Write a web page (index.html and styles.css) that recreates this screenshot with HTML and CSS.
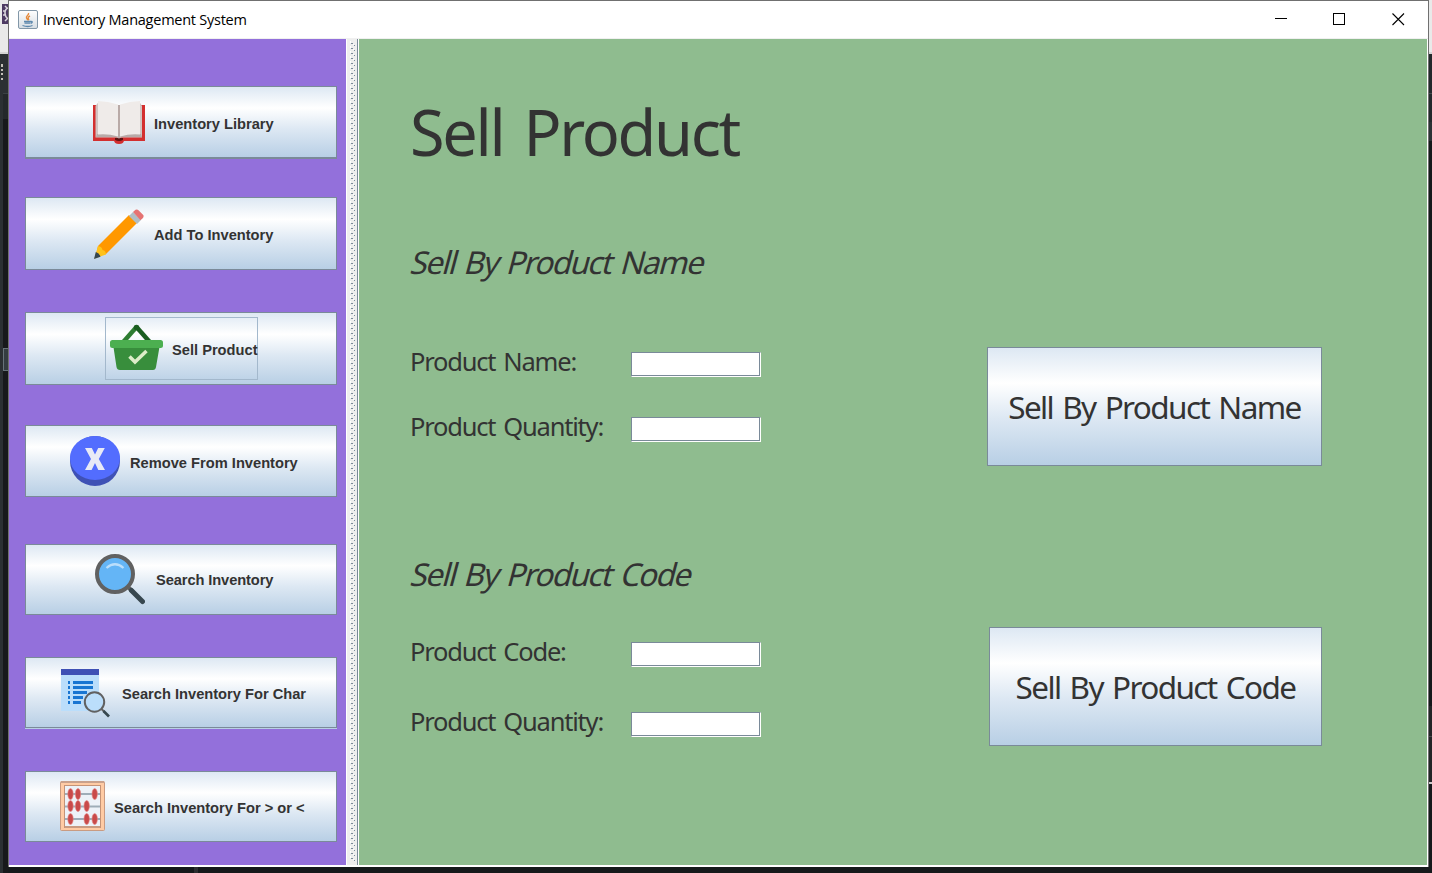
FILE: index.html
```html
<!DOCTYPE html>
<html lang="en">
<head>
<meta charset="utf-8">
<title>Inventory Management System</title>
<link rel="stylesheet" href="styles.css">
</head>
<body>
<svg class="desktop" width="1432" height="873" viewBox="0 0 1432 873" shape-rendering="crispEdges">
  <rect width="1432" height="873" fill="#15191b"/>
  <rect width="1432" height="54" fill="#e9e9e9"/>
  <rect y="52" width="1432" height="2" fill="#d4d4d4"/>
  <rect x="2" y="4" width="6" height="20" fill="#4d3a63"/>
  <path d="M8 8q-3 1-3 5t3 6M3 11h2v4H3M5 6l2 2M5 21l2-2" fill="none" stroke="#d8d4dc" stroke-width="1.500" shape-rendering="auto"/>
  <rect y="54" width="8" height="819" fill="#2b3033"/>
  <rect x="3" y="93" width="5" height="26" fill="#23282a"/>
  <rect x="3" y="93" width="5" height="1" fill="#3a4144"/>
  <rect x="3" y="119" width="5" height="754" fill="#17191b"/>
  <path d="M1 64h2v3H1zM1 69h2v2H1zM1 73h2v2H1zM1 78h2v2H1z" fill="#c3c0ba"/>
  <path d="M8 348.500H3.500V370.500H8" fill="#343d41" stroke="#67737a"/>
  <rect x="194" y="867" width="4" height="6" fill="#2b2d2f"/>
  <rect x="1428" y="54" width="4" height="68" fill="#23292c"/>
  <rect x="1428" y="93" width="4" height="1" fill="#444b4e"/>
  <rect x="1428" y="122" width="4" height="19" fill="#2b3235"/>
  <rect x="1428" y="706" width="4" height="76" fill="#232527"/>
  <rect x="1428" y="736" width="4" height="1" fill="#46494b"/>
  <rect x="1428" y="782" width="4" height="2" fill="#c9c9c9"/>
</svg>
<div class="window">
  <header class="titlebar">
    <svg class="java" width="20" height="20" viewBox="0 0 20 20">
      <defs><linearGradient id="jg" x2="0" y2="1"><stop offset="0" stop-color="#fff"/><stop offset="1" stop-color="#d5dce2"/></linearGradient></defs>
      <rect x=".5" y=".5" width="19" height="18" rx="1.500" fill="url(#jg)" stroke="#8297a8"/>
      <path d="M10.500 3c1 2-3 3-2 5 .5 1 1.500 1.500 1.300 2.500M12 6c-2 1-2.500 2-1 4" fill="none" stroke="#e58a3c" stroke-width="1.400"/>
      <path d="M6 11.500h7M6.500 13.200h6M4.500 15.500q5.500 2 10 0M13 11.500q2.500 0 0 2" fill="none" stroke="#5d88ad" stroke-width="1.300"/>
    </svg>
    <span class="caption">Inventory Management System</span>
    <svg class="controls" width="140" height="20" viewBox="0 0 140 20" fill="none" stroke="#000">
      <path d="M7 9.500H19M65.500 4.500h11v11h-11z" shape-rendering="crispEdges"/>
      <path d="M124.500 4.500l11.500 11.500M136 4.500L124.500 16" stroke-width="1.100"/>
    </svg>
  </header>
  <div class="body">
    <nav class="sidebar">
      <button class="nav n1">
        <svg width="52" height="44" viewBox="93 100 52 44">
          <path d="M93 105h52v36H93z" fill="#d32f2f"/><path d="M114 140h10q0 4-5 4t-5-4z" fill="#d32f2f"/><path d="M115 138h8v2q-4 2-8 0z" fill="#5a1212"/>
          <path d="M95.500 106l3-4v34h41v-34l2.500 4v31.500H121l-2 1-2-1H95.500z" fill="#d1c4c2"/>
          <path d="M97 134h22v4l-3-1H96zM141 134h-22v4l3-1h20z" fill="#b8aaa8"/>
          <path d="M98 101q10 0 20 3.500v32q-10-3-20-2zM140 101q-10 0-20 3.500v32q10-3 20-2z" fill="#efebe9"/>
          <path d="M118 105h2v33h-2z" fill="#b9aaa7"/>
        </svg><span>Inventory Library</span></button>
      <button class="nav n2">
        <svg width="50" height="50" viewBox="94 209 50 50">
          <path d="M129 215l8 8-31 31-9 2-1-1 2-9z" fill="#ff9800"/>
          <path d="M98 246l-3.500 12.500L106 254.500q0-4-3.500-4.500-.5-3.500-4.500-4z" fill="#ffc21a"/>
          <path d="M95.800 252l-1.800 7 6.500-2.300q-1-3.500-4.700-4.700z" fill="#37474f"/>
          <path d="M129 216l4-4 8 8-4 4z" fill="#b0bec5"/><path d="M133 212l2.500-2.300q2-.5 3 .5l5 5q.5 2-.8 3l-2.200 2z" fill="#e57373"/>
        </svg><span>Add To Inventory</span></button>
      <button class="nav n3"><span class="focus">
        <svg width="54" height="50" viewBox="109 324 54 50">
          <path d="M136.500 327l15 17" stroke="#1b5e20" stroke-width="4.500"/><path d="M136.500 327l-15 17" stroke="#2e7d32" stroke-width="4.500"/><circle cx="136.500" cy="327.500" r="2.700" fill="#1b5e20"/>
          <path d="M113 344h47l-4 23q-.5 3-3 3h-33q-3 0-3.500-3z" fill="#388e3c"/><rect x="110" y="340" width="53" height="8" rx="2.500" fill="#4caf50"/>
          <path d="M129.500 356.500l5.500 5.500 11.500-11" fill="none" stroke="#dcedc8" stroke-width="3.500"/>
        </svg><span>Sell Product</span></span></button>
      <button class="nav n4">
        <svg width="50" height="51" viewBox="70 436 50 51">
          <circle cx="95" cy="461" r="25" fill="#3f51b5"/><ellipse cx="95" cy="458" rx="25" ry="22" fill="#536dfe"/>
          <path d="M85 448h6.800l3.200 6.500 3.200-6.500h6.600l-6 11 6.200 11h-6.700l-3.300-7-3.400 7H85l6-11z" fill="#e8eaf6"/>
        </svg><span>Remove From Inventory</span></button>
      <button class="nav n5">
        <svg width="50" height="52" viewBox="95 554 50 52">
          <path d="M127 586l6 6" stroke="#616161" stroke-width="4"/><path d="M131.500 590.500L142.500 601.500" stroke="#37474f" stroke-width="5" stroke-linecap="round"/>
          <circle cx="115" cy="574" r="18" fill="#64b5f6" stroke="#616161" stroke-width="4"/><path d="M106.500 568q8.500-7.500 17 0" fill="none" stroke="#bbdefb" stroke-width="2.300"/>
        </svg><span>Search Inventory</span></button>
      <button class="nav n6">
        <svg width="50" height="50" viewBox="61 668 50 50">
          <path d="M61 669h38v42H61z" fill="#bbdefb"/><path d="M61 669h38v6H61z" fill="#3f51b5"/>
          <path d="M68 682.500h2m3 0h20M68 687.500h2m3 0h20M68 692.500h2m3 0h14M68 697.500h2m3 0h10M68 702.500h2m3 0h8" stroke="#1976d2" stroke-width="3"/>
          <circle cx="94.500" cy="702" r="9.700" fill="#bbdefb" stroke="#616161" stroke-width="2"/><path d="M101.500 709l3 3" stroke="#616161" stroke-width="2"/><path d="M103.500 711l5.500 5.500" stroke="#37474f" stroke-width="2.700"/>
        </svg><span>Search Inventory For Char</span></button>
      <button class="nav n7">
        <svg width="45" height="52" viewBox="60 781 45 52">
          <rect x="60.500" y="781.500" width="44" height="49" rx="1" fill="#ffcba4" stroke="#c99b82"/><path d="M61 782h43" stroke="#c9a18c" stroke-width="2"/>
          <rect x="64.500" y="785.500" width="36" height="42" fill="#edf2f8" stroke="#c49377"/><path d="M65 827h35" stroke="#c99b82" stroke-width="2"/>
          <path d="M65 794h35M65 806.500h35M65 819h35" stroke="#9fadb8" stroke-width="2"/>
          <g fill="#c94a4a" stroke="#e68a86" stroke-width=".6"><ellipse cx="70.500" cy="794" rx="2.700" ry="5.500"/><ellipse cx="78" cy="794" rx="2.700" ry="5.500"/><ellipse cx="94.700" cy="794" rx="2.700" ry="5.500"/><ellipse cx="70.500" cy="806" rx="2.700" ry="5.500"/><ellipse cx="78" cy="806" rx="2.700" ry="5.500"/><ellipse cx="86.700" cy="806" rx="2.700" ry="5.500"/><ellipse cx="70.500" cy="819" rx="2.700" ry="5.500"/><ellipse cx="86.700" cy="819" rx="2.700" ry="5.500"/><ellipse cx="94.700" cy="819" rx="2.700" ry="5.500"/></g>
        </svg><span>Search Inventory For &gt; or &lt;</span></button>
    </nav>
    <svg class="divider" width="13" height="826" shape-rendering="crispEdges">
      <defs><pattern id="grip" width="13" height="5" y="2" patternUnits="userSpaceOnUse"><path d="M5 2h2v1H5zM8 4h1v1H8z" fill="#7a8a99"/><path d="M4 0h1v2H4zM7 3h1v1H7z" fill="#fff"/></pattern></defs>
      <rect width="13" height="826" fill="#eee"/><rect y="2" width="13" height="820" fill="url(#grip)"/><rect width="1" height="826" fill="#fff"/><rect x="11" width="1" height="826" fill="#7a8a99"/><rect x="12" width="1" height="826" fill="#fff"/>
    </svg>
    <main class="panel">
      <h1>Sell Product</h1>
      <h2 class="by-name">Sell By Product Name</h2>
      <section class="form form-name">
        <div class="fields">
          <label><span>Product Name:</span><input type="text"></label>
          <label><span>Product Quantity:</span><input type="text"></label>
        </div>
        <button class="action">Sell By Product Name</button>
      </section>
      <h2 class="by-code">Sell By Product Code</h2>
      <section class="form form-code">
        <div class="fields">
          <label><span>Product Code:</span><input type="text"></label>
          <label><span>Product Quantity:</span><input type="text"></label>
        </div>
        <button class="action">Sell By Product Code</button>
      </section>
    </main>
  </div>
</div>
</body>
</html>
```

FILE: styles.css
```css
* { box-sizing: border-box; }
body { margin: 0; width: 1432px; height: 873px; overflow: hidden; position: relative; color: #333; }
svg { display: block; flex: none; }
.desktop { position: absolute; left: 0; top: 0; }
.window { position: absolute; left: 8px; top: 0; width: 1421px; height: 867px; border: 1px solid #707070; border-bottom: 0; background: #fff; }
.titlebar { height: 38px; display: flex; align-items: center; padding-left: 9px; border-bottom: 1px solid #f0f0f0; }
.caption { margin-left: 5px; font: 14.5px/20px "Open Sans", sans-serif; color: #000; letter-spacing: -.25px; white-space: nowrap; flex: 1; }
.controls { margin: -1px 20px 0 0; }
.body { display: flex; height: 826px; padding-right: 1px; }
.sidebar { width: 337px; background: #9370db; padding: 47px 0 0 16px; display: flex; flex-direction: column; }
button { background: linear-gradient(#dde8f3 0, #fff 30%, #dde8f3 60%, #b8cfe5 100%); border: 1px solid #7a8a99; border-radius: 0; color: #333; padding: 0; }
.nav { width: 312px; height: 72px; flex: none; display: flex; align-items: center; font: bold 14.67px "Liberation Sans", Arial, sans-serif; white-space: nowrap; }
.nav span { padding-top: 3px; }
.n1 { padding-left: 67px; gap: 9px; border-bottom-width: 2px; height: 73px; }
.nav.n1 span { padding-top: 4px; }
.n2 { margin-top: 38px; padding-left: 68px; gap: 10px; height: 73px; }
.n3 { margin-top: 42px; padding-left: 79px; height: 73px; }
.nav .focus { display: flex; align-items: center; gap: 9px; width: 153px; height: 63px; border: 1px solid #a3b8cc; padding: 0 0 0 3px; }
.n4 { margin-top: 40px; padding-left: 44px; gap: 10px; }
.n5 { margin-top: 47px; padding-left: 69px; gap: 11px; height: 71px; letter-spacing: -.1px; }
.nav.n5 span { padding-top: 1px; }
.n6 { margin-top: 42px; padding-left: 35px; gap: 11px; box-shadow: 0 1px #b8cfe5; height: 71px; }
.n7 { margin-top: 43px; padding-left: 34px; gap: 9px; height: 71px; }
.panel { width: 1068px; background: #8fbc8f; padding: 60px 105px 0 51px; font-family: "Noto Sans", sans-serif; }
h1, h2 { margin: 0; font-weight: normal; white-space: nowrap; }
h1 { font-size: 63px; line-height: 66px; letter-spacing: -2.3px; word-spacing: 6px; }
h2 { font-size: 31.5px; line-height: 40px; letter-spacing: -1.6px; word-spacing: 2.5px; transform: translateX(2px) skewX(-15deg); }
.by-name { margin-top: 77px; }
.form { display: flex; justify-content: space-between; height: 119px; }
.form-name { margin-top: 65px; }
.by-code { margin-top: 88px; }
.form-code { margin-top: 33px; }
.fields { display: flex; flex-direction: column; gap: 40px; padding-top: 5px; }
.form-code .fields { gap: 45px; padding-top: 15px; }
label { display: flex; align-items: center; height: 25px; font-size: 25.5px; letter-spacing: -1.2px; word-spacing: 2.5px; white-space: nowrap; }
label span { width: 221px; line-height: 25px; margin-top: -7px; }
input { width: 130px; height: 25px; border: 1px solid #7a8a99; border-right-color: #fff; border-bottom-color: #fff; background: #fff; box-shadow: inset -1px -1px #7a8a99; padding: 0; }
.action { width: 335px; font: 31.5px "Noto Sans", sans-serif; letter-spacing: -1.6px; word-spacing: 2.5px; white-space: nowrap; }
.form-code .action { width: 333px; }
```
